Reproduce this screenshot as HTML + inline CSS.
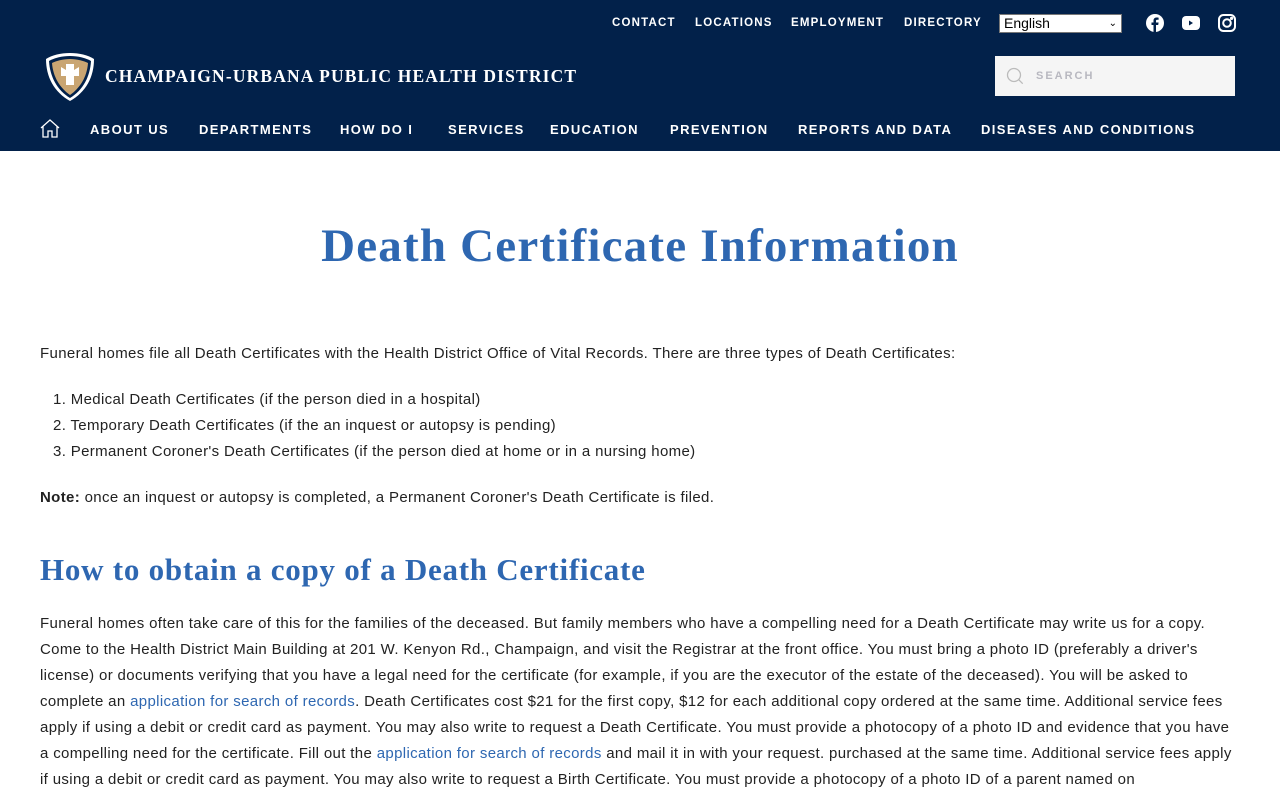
<!DOCTYPE html>
<html><head><meta charset="utf-8"><style>
*{box-sizing:border-box}
body{margin:0;width:1280px;height:800px;overflow:hidden;background:#fff;font-family:"Liberation Sans",sans-serif}
.hdr{background:#02214a;height:151px;position:relative;color:#fff}
.top{position:absolute;top:17px;font-size:11.5px;font-weight:bold;letter-spacing:1.2px}
.sel{position:absolute;left:999px;top:14px;width:123px;height:19px;background:#fff;border:1px solid #777;color:#000;font-size:14px;padding:0 4px;line-height:17px;letter-spacing:0}
.sel span{position:absolute;right:4px;top:0;font-size:10px}
.logo{position:absolute;left:44px;top:52px}
.name{position:absolute;left:105px;top:66px;font-family:"Liberation Serif",serif;font-weight:bold;font-size:17.5px;letter-spacing:1.15px}
.search{position:absolute;left:995px;top:56px;width:240px;height:40px;background:#f5f5f5}
.search b{position:absolute;left:41px;top:14px;font-size:11px;color:#b8b8c0;letter-spacing:2px}
.nav{position:absolute;top:122px;font-size:13px;font-weight:bold;letter-spacing:1.4px}
h1{font-family:"Liberation Serif",serif;color:#2e67b1;font-size:47px;letter-spacing:1.2px;text-align:center;margin:0;position:absolute;top:219px;width:100%}
h2{font-family:"Liberation Serif",serif;color:#2e67b1;font-size:31px;letter-spacing:0.75px;margin:0;position:absolute;top:552px;left:40px}
.t{position:absolute;left:40px;font-size:15px;letter-spacing:0.35px;color:#222;line-height:26px;width:1200px}
a{color:#2e67b1;text-decoration:none}
</style></head><body>
<div class="hdr">
<div class="top" style="left:612px">CONTACT</div>
<div class="top" style="left:695px">LOCATIONS</div>
<div class="top" style="left:791px">EMPLOYMENT</div>
<div class="top" style="left:904px">DIRECTORY</div>
<div class="sel">English<span>&#8964;</span></div>
<svg style="position:absolute;left:1146px;top:14px" width="18" height="18" viewBox="0 0 18 18"><circle cx="9" cy="9" r="9" fill="#fff"/><path d="M10 18V11h2.2l.4-2.5H10V7c0-.8.3-1.2 1.2-1.2h1.4V3.6c-.4 0-1.2-.1-2-.1-2 0-3.1 1.2-3.1 3.3v1.7H5.5V11h2v7z" fill="#02214a"/></svg>
<svg style="position:absolute;left:1182px;top:16px" width="18" height="14" viewBox="0 0 18 14"><rect width="18" height="14" rx="4" fill="#fff"/><path d="M7 4.5v5l4-2.5z" fill="#02214a"/></svg>
<svg style="position:absolute;left:1218px;top:14px" width="18" height="18" viewBox="0 0 18 18" fill="none" stroke="#fff" stroke-width="2"><rect x="1" y="1" width="16" height="16" rx="4.5"/><circle cx="9" cy="9" r="3.8"/><circle cx="13.6" cy="4.4" r=".6" fill="#fff"/></svg>
<svg class="logo" width="52" height="50" viewBox="0 0 52 50"><path d="M26 1C17 1 8 3 2 7c0 18 8 33 24 42C42 40 50 25 50 7 44 3 35 1 26 1z" fill="#fff"/><path d="M26 4C18 4 10 6 5 9c1 16 8 29 21 37C39 38 46 25 47 9 42 6 34 4 26 4z" fill="#02214a"/><path d="M26 7C19 7 12 9 8 11c1 14 8 25 18 32 10-7 17-18 18-32C40 9 33 7 26 7z" fill="#c9a572"/><path d="M22 12h8v6l5-3v9h-5v9h-8v-9h-5v-9l5 3z" fill="#fff"/></svg>
<div class="name">CHAMPAIGN-URBANA PUBLIC HEALTH DISTRICT</div>
<div class="search"><svg style="position:absolute;left:11px;top:11px" width="18" height="18" viewBox="0 0 18 18" fill="none" stroke="#bbb" stroke-width="1.3"><circle cx="8" cy="8" r="6.5"/><path d="M12.7 12.7l4 4"/></svg><b>SEARCH</b></div>
<svg style="position:absolute;left:40px;top:119px" width="20" height="19" viewBox="0 0 20 19" fill="none" stroke="#fff" stroke-width="1.3"><path d="M1 9L10 1l9 8M3 7.5V18h5v-6h4v6h5V7.5"/></svg>
<div class="nav" style="left:90px">ABOUT US</div>
<div class="nav" style="left:199px">DEPARTMENTS</div>
<div class="nav" style="left:340px">HOW DO I</div>
<div class="nav" style="left:448px">SERVICES</div>
<div class="nav" style="left:550px">EDUCATION</div>
<div class="nav" style="left:670px">PREVENTION</div>
<div class="nav" style="left:798px">REPORTS AND DATA</div>
<div class="nav" style="left:981px">DISEASES AND CONDITIONS</div>
</div>
<h1>Death Certificate Information</h1>
<div class="t" style="top:341px">Funeral homes file all Death Certificates with the Health District Office of Vital Records. There are three types of Death Certificates:</div>
<div class="t" style="top:387px;left:53px">1. Medical Death Certificates (if the person died in a hospital)<br>2. Temporary Death Certificates (if the an inquest or autopsy is pending)<br>3. Permanent Coroner's Death Certificates (if the person died at home or in a nursing home)</div>
<div class="t" style="top:485px"><b>Note:</b> once an inquest or autopsy is completed, a Permanent Coroner's Death Certificate is filed.</div>
<h2>How to obtain a copy of a Death Certificate</h2>
<div class="t" style="top:611px">Funeral homes often take care of this for the families of the deceased. But family members who have a compelling need for a Death Certificate may write us for a copy. Come to the Health District Main Building at 201 W. Kenyon Rd., Champaign, and visit the Registrar at the front office. You must bring a photo ID (preferably a driver's license) or documents verifying that you have a legal need for the certificate (for example, if you are the executor of the estate of the deceased). You will be asked to complete an <a>application for search of records</a>. Death Certificates cost $21 for the first copy, $12 for each additional copy ordered at the same time. Additional service fees apply if using a debit or credit card as payment. You may also write to request a Death Certificate. You must provide a photocopy of a photo ID and evidence that you have a compelling need for the certificate. Fill out the <a>application for search of records</a> and mail it in with your request. purchased at the same time. Additional service fees apply if using a debit or credit card as payment. You may also write to request a Birth Certificate. You must provide a photocopy of a photo ID of a parent named on</div>
</body></html>
